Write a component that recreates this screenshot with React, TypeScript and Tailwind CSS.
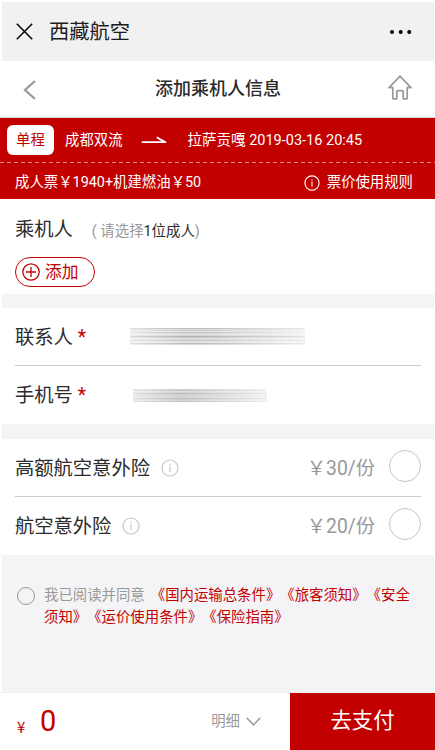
import React from "react";
import clsx from "clsx";

interface IconProps {
  className?: string;
}

const InfoIcon: React.FC<IconProps> = ({ className }) => (
  <svg
    viewBox="0 0 18 18"
    fill="none"
    stroke="currentColor"
    strokeWidth="1.2"
    className={className}
  >
    <circle cx="9" cy="9" r="8" />
    <path d="M9 7.4v5.6M9 4.8v1.5" />
  </svg>
);

const HomeIcon: React.FC<IconProps> = ({ className }) => (
  <svg
    viewBox="0 0 24 25"
    fill="none"
    stroke="currentColor"
    strokeWidth="1.7"
    strokeLinejoin="round"
    className={className}
  >
    <path d="M12 1.2 1 12.6h3.8v10.6q0 .6.6.6h3.4v-7.2q0-.9.9-.9h4.6q.9 0 .9.9v7.2h3.4q.6 0 .6-.6V12.6H23Z" />
  </svg>
);

const blurredName = [
  "#c9c9c9", "#e6e6e6", "#dcdcdc", "#eeeeee", "#d2d2d2", "#e8e8e8",
  "#f0f0f0", "#e2e2e2", "#bdbdbd", "#d6d6d6", "#f0f0f0", "#e5e5e5",
  "#d4d4d4", "#ededed", "#f2f2f2", "#c8c8c8", "#e6e6e6",
];

const blurredPhone = [
  "#dedede", "#d4d4d4", "#ebebeb", "#e3e3e3", "#c9c9c9", "#dedede",
  "#e6e6e6", "#dbdbdb", "#eaeaea", "#c9c9c9", "#dedede", "#e7e7e7",
  "#cecece",
];

const Redacted: React.FC<{ rows: string[]; className?: string }> = ({
  rows,
  className,
}) => (
  <div className={className}>
    <div className="relative flex flex-col">
      {rows.map((color, index) => (
        <div key={index} className="h-px" style={{ backgroundColor: color }} />
      ))}
      <div className="absolute inset-0 bg-linear-to-r from-white/40 via-black/6 via-35% to-white/60" />
    </div>
  </div>
);

interface Field {
  label: string;
  rows: string[];
  barClassName: string;
}

const fields: Field[] = [
  { label: "联系人", rows: blurredName, barClassName: "ml-[43px] w-[175px]" },
  { label: "手机号", rows: blurredPhone, barClassName: "ml-[46px] w-[134px]" },
];

const insurances = [
  { label: "高额航空意外险", price: "￥30/份" },
  { label: "航空意外险", price: "￥20/份" },
];

const TitleBar: React.FC = () => (
  <header className="mt-0.5 ml-0.5 mr-px flex h-[59px] items-center bg-[#f1f1f1] pl-3.5 pr-[22px] text-black">
    <svg
      viewBox="0 0 17 17"
      className="h-[17px] w-[17px]"
      fill="none"
      stroke="currentColor"
      strokeWidth="1.5"
    >
      <path d="m.8.8 15.4 15.4M16.2.8.8 16.2" />
    </svg>
    <h1 className="ml-4 pt-px text-[20.3px] text-[#1c1c1c]">西藏航空</h1>
    <svg viewBox="0 0 22 4" className="ml-auto h-1 w-[22px]" fill="currentColor">
      <circle cx="2" cy="2" r="2" />
      <circle cx="10.7" cy="2" r="2" />
      <circle cx="19.2" cy="2" r="2" />
    </svg>
  </header>
);

const NavBar: React.FC = () => (
  <nav className="flex h-[57px] items-center justify-between border-b border-[#d8cccc] pl-[23px] pr-[23px] text-[#999]">
    <svg
      viewBox="0 0 13 20"
      className="mt-px h-5 w-[13px]"
      fill="none"
      stroke="currentColor"
      strokeWidth="2.3"
    >
      <path d="M12 1 2 10l10 9" />
    </svg>
    <h2 className="pl-[12px] pb-px text-[18px] font-medium text-[#2b2b2b]">
      添加乘机人信息
    </h2>
    <HomeIcon className="mb-[3px] h-[25px] w-6" />
  </nav>
);

const FlightSummary: React.FC = () => (
  <section className="h-[81px] bg-[#c30000] text-[14.4px] text-white">
    <div className="flex h-11 items-center pl-[7px]">
      <span className="flex h-[30px] w-[47px] items-center justify-center rounded-[6px] bg-white pt-px text-[#c30000]">
        单程
      </span>
      <span className="ml-[11px] pt-px">成都双流</span>
      <svg viewBox="0 0 26 8" className="ml-[18px] h-2 w-[26px]" fill="currentColor">
        <path d="M1 5.2h19.5L15.3 2l.8-1.4L25 5.4q1.1 1.6-.5 1.6H1q-1-.9 0-1.8Z" />
      </svg>
      <span className="ml-[21px] whitespace-pre pt-px text-[14.5px]">
        拉萨贡嘎 2019-03-16 20:45
      </span>
    </div>
    <div className="h-px bg-[repeating-linear-gradient(90deg,#e78d8d_0_4px,transparent_4px_7px)]" />
    <div className="flex h-[36px] items-center pl-[15px] pr-[22px]">
      <span className="pt-[3px] text-[14.4px]">成人票￥1940+机建燃油￥50</span>
      <InfoIcon className="ml-auto mt-[3px] h-4 w-4" />
      <span className="ml-[7px] pt-1">票价使用规则</span>
    </div>
  </section>
);

const PassengerSection: React.FC = () => (
  <section className="h-[95px] bg-white pl-[15px]">
    <div className="flex h-[58px] items-center pt-[4px]">
      <span className="text-[19.3px]">乘机人</span>
      <span className="ml-[19px] mt-[3px] whitespace-pre text-[14.4px] text-[#999]">
        {"( "}请选择<span className="text-[#2b2b2b]">1位成人</span>)
      </span>
    </div>
    <button
      type="button"
      className="flex h-[30px] w-20 items-center rounded-full border border-[#c30000] pl-[6px] text-[16.8px] text-[#c30000]"
    >
      <svg
        viewBox="0 0 18 18"
        className="h-[18px] w-[18px]"
        fill="none"
        stroke="currentColor"
        strokeWidth="1.3"
      >
        <circle cx="9" cy="9" r="8.2" />
        <path d="M9 4v10M4 9h10" />
      </svg>
      <span className="ml-[5px] pt-px">添加</span>
    </button>
  </section>
);

const Agreement: React.FC = () => (
  <div className="flex pl-[17px] pt-[30px]">
    <span className="mt-[2px] h-[18px] w-[18px] shrink-0 rounded-full border border-[#999]" />
    <p className="ml-[9px] w-[374px] text-[14.4px] leading-[22px] text-[#999] [text-spacing-trim:space-all]">
      我已阅读并同意
      <span className="text-[#c30000]">
        <span className="ml-[6px]">《国内运输总条件》《旅客须知》《安全</span>
        <br />
        须知》《运价使用条件》《保险指南》
      </span>
    </p>
  </div>
);

const PayBar: React.FC = () => (
  <footer className="flex h-[58px] border-t border-[#eee] bg-white">
    <div className="flex flex-1 items-center pl-[17px] pr-[29px]">
      <span className="mt-[9px] w-[9px] font-['Noto_Sans_CJK_SC'] text-[15px] leading-none text-[#c30000]">
        ¥
      </span>
      <span className="ml-[14px] text-[29px] leading-none text-[#c30000]">0</span>
      <span className="ml-auto text-[14.4px] text-[#999]">明细</span>
      <svg
        viewBox="0 0 15 9"
        className="ml-[6px] h-[9px] w-[15px]"
        fill="none"
        stroke="#999"
        strokeWidth="1.5"
      >
        <path d="m.7.8 6.8 7 6.8-7" />
      </svg>
    </div>
    <button
      type="button"
      className="h-[57px] w-[145px] bg-[#c30000] text-[21.4px] text-white"
    >
      去支付
    </button>
  </footer>
);

export default function App() {
  return (
    <div className="flex h-[750px] w-[435px] flex-col overflow-hidden bg-white font-['Roboto','Noto_Sans_CJK_SC',sans-serif] text-[#2b2b2b]">
      <TitleBar />
      <NavBar />
      <FlightSummary />
      <PassengerSection />
      <main className="ml-0.5 mr-px flex flex-1 flex-col bg-[#f4f4f7] pt-[14px]">
        <section className="h-[116px] bg-white px-[13px]">
          {fields.map(({ label, rows, barClassName }, index) => (
            <div
              key={label}
              className={clsx(
                "flex h-[58px] items-center text-[19.3px]",
                index === 0 && "border-b border-[#ccc]",
              )}
            >
              <span className="pt-[3px]">{label}</span>
              <span className="ml-[5px] w-[9px] pt-[3px] text-[#c30000]">*</span>
              <Redacted rows={rows} className={barClassName} />
            </div>
          ))}
        </section>

        <section className="mt-[15px] h-[116px] bg-white px-[13px]">
          {insurances.map(({ label, price }, index) => (
            <div
              key={label}
              className={clsx(
                "flex h-[58px] items-center text-[19.3px]",
                index === 0 && "border-b border-[#ccc]",
              )}
            >
              <span className="pt-[3px]">{label}</span>
              <InfoIcon className="ml-[11px] h-[18px] w-[18px] text-[#c6c6c6]" />
              <span className="ml-auto pt-[3px] text-[#999]">{price}</span>
              <span className="mb-1 ml-[14px] h-8 w-8 rounded-full border border-[#c6c6c6]" />
            </div>
          ))}
        </section>

        <div className="-ml-0.5">
          <Agreement />
        </div>
      </main>
      <PayBar />
    </div>
  );
}
